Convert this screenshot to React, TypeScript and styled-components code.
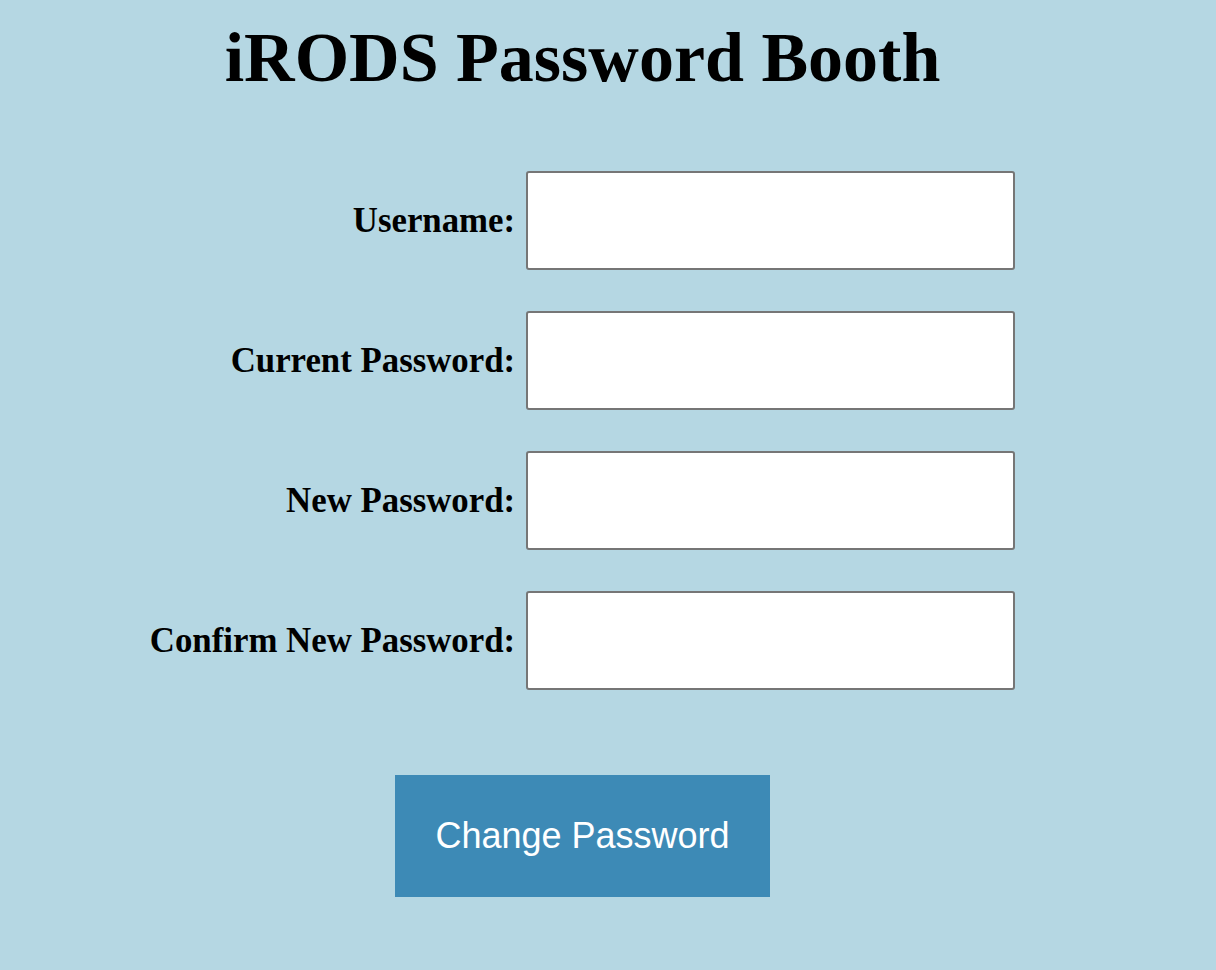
import React from "react";
import styled, { createGlobalStyle } from "styled-components";

const GlobalStyle = createGlobalStyle`
  html, body {
    margin: 0;
    padding: 0;
    background: #b5d7e3;
  }
  body {
    font-family: "Liberation Serif", "Times New Roman", serif;
  }
`;

const Page = styled.main`
  width: 1165px;
  min-height: 970px;
  padding-top: 18px;
  box-sizing: border-box;
  display: flex;
  flex-direction: column;
  align-items: center;
`;

const Title = styled.h1`
  margin: 0;
  font-family: "Liberation Serif", "Times New Roman", serif;
  font-weight: 700;
  font-size: 70px;
  line-height: 80px;
  color: #000;
`;

const Form = styled.form`
  margin-top: 73px;
  display: flex;
  flex-direction: column;
  align-items: center;
`;

const Fields = styled.div`
  display: grid;
  grid-template-columns: auto 489px;
  column-gap: 11px;
  row-gap: 41px;
  align-items: center;
`;

const Label = styled.label`
  justify-self: end;
  font-family: "Liberation Serif", "Times New Roman", serif;
  font-weight: 700;
  font-size: 34.8px;
  line-height: 35px;
  color: #000;
  white-space: nowrap;
`;

const Input = styled.input`
  box-sizing: border-box;
  width: 489px;
  height: 99px;
  margin: 0;
  padding: 0 8px;
  background: #fff;
  border: 2px solid #767676;
  border-radius: 3px;
  font-size: 30px;
  outline: none;
`;

const Submit = styled.button`
  margin-top: 85px;
  border: none;
  background: #3d8ab6;
  color: #fff;
  font-family: "Liberation Sans", Arial, sans-serif;
  font-size: 36px;
  line-height: 42px;
  padding: 40px 40px;
  cursor: pointer;
`;

const fields = [
  { id: "username", label: "Username:", type: "text" },
  { id: "current", label: "Current Password:", type: "password" },
  { id: "new", label: "New Password:", type: "password" },
  { id: "confirm", label: "Confirm New Password:", type: "password" },
];

export default function App() {
  return (
    <>
      <GlobalStyle />
      <Page>
        <Title>iRODS Password Booth</Title>
        <Form onSubmit={(e) => e.preventDefault()}>
          <Fields>
            {fields.map((f) => (
              <React.Fragment key={f.id}>
                <Label htmlFor={f.id}>{f.label}</Label>
                <Input id={f.id} type={f.type} />
              </React.Fragment>
            ))}
          </Fields>
          <Submit type="submit">Change Password</Submit>
        </Form>
      </Page>
    </>
  );
}
